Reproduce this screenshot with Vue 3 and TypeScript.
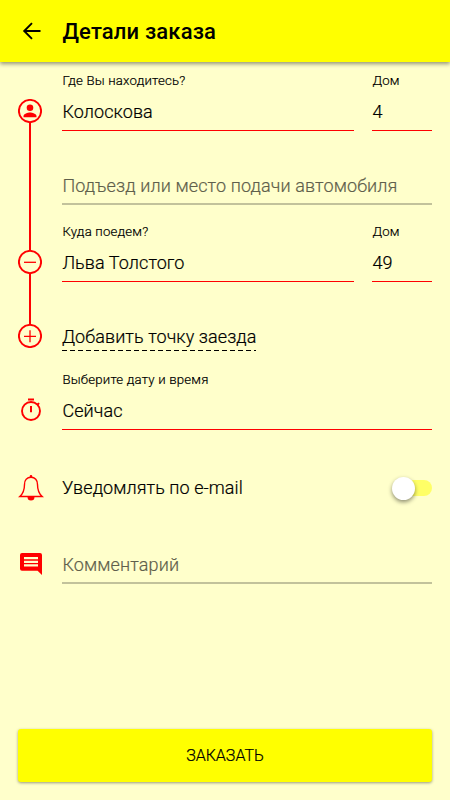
<script setup lang="ts">
import { ref } from 'vue'

interface Stop {
  label: string
  street: string
  house: string
}

const from: Stop = { label: 'Где Вы находитесь?', street: 'Колоскова', house: '4' }
const to: Stop = { label: 'Куда поедем?', street: 'Льва Толстого', house: '49' }
const notify = ref(false)
</script>

<template>
  <main class="screen">
    <header class="bar">
      <svg class="back" viewBox="0 0 20 20" aria-hidden="true">
        <path d="M18.5 10H2.5M10 2.2L2.2 10l7.8 7.8" />
      </svg>
      <h1 class="title">Детали заказа</h1>
    </header>

    <section class="route">
      <div class="rail">
        <svg class="node" viewBox="0 0 24 24">
          <circle class="ring" cx="12" cy="12" r="11.1" />
          <circle class="fill" cx="12" cy="8.8" r="3.3" />
          <path class="fill" d="M5.5 18.2v-1.1c0-2.3 4.3-3.6 6.5-3.6s6.5 1.3 6.5 3.6v1.1z" />
        </svg>
        <span class="link link-long"></span>
        <svg class="node" viewBox="0 0 24 24">
          <circle class="ring" cx="12" cy="12" r="11.1" />
          <path class="sign" d="M6 12.3h12" />
        </svg>
        <span class="link link-short"></span>
        <svg class="node" viewBox="0 0 24 24">
          <circle class="ring" cx="12" cy="12" r="11.1" />
          <path class="sign" d="M6 12.3h12M12 6.3v12" />
        </svg>
      </div>
      <div class="stops">
        <div class="pair first">
          <div class="field street">
            <span class="label">{{ from.label }}</span>
            <span class="value">{{ from.street }}</span>
          </div>
          <div class="field house">
            <span class="label">Дом</span>
            <span class="value">{{ from.house }}</span>
          </div>
        </div>
        <div class="field entrance">
          <span class="value hint">Подъезд или место подачи автомобиля</span>
        </div>
        <div class="pair second">
          <div class="field street">
            <span class="label">{{ to.label }}</span>
            <span class="value">{{ to.street }}</span>
          </div>
          <div class="field house">
            <span class="label">Дом</span>
            <span class="value">{{ to.house }}</span>
          </div>
        </div>
        <div class="add"><span class="add-text">Добавить точку заезда</span></div>
      </div>
    </section>

    <section class="row time">
      <div class="icon">
        <svg class="glyph timer" viewBox="0 0 24 24">
          <circle class="ring" cx="12" cy="13" r="9" />
          <path class="thick" d="M9 1.5h6M12 8v6.2M18.4 6.8l1.7-1.7" />
        </svg>
      </div>
      <div class="field">
        <span class="label">Выберите дату и время</span>
        <span class="value">Сейчас</span>
      </div>
    </section>

    <section class="row notify">
      <div class="icon">
        <svg class="glyph bell" viewBox="0 0 26 28">
          <path class="outline" d="M13 3.2c-4.1 0-6.5 3-6.5 7.2 0 6.4-1.5 9.2-4.7 12.1h22.4c-3.2-2.9-4.7-5.7-4.7-12.1 0-4.2-2.4-7.2-6.5-7.2z" />
          <path class="fill" d="M11.7 3.4V2.2a1.3 1.3 0 0 1 2.6 0v1.2zM9.5 23.1h7a3.5 3.5 0 0 1-7 0z" />
        </svg>
      </div>
      <span class="notify-text">Уведомлять по e-mail</span>
      <button class="switch" :class="{ on: notify }" aria-label="Уведомлять по e-mail" @click="notify = !notify">
        <span class="knob"></span>
      </button>
    </section>

    <section class="row comment">
      <div class="icon">
        <svg class="glyph chat" viewBox="0 0 22 22">
          <path class="fill" fill-rule="evenodd" d="M2 0h18a2 2 0 0 1 2 2v20l-4.4-4.2H2a2 2 0 0 1-2-2V2a2 2 0 0 1 2-2zM4 4.1v2.2h14V4.1zM4 7.7v2.2h14V7.7zM4 11.3v2.2h14v-2.2z" />
        </svg>
      </div>
      <div class="field"><span class="value hint">Комментарий</span></div>
    </section>

    <button class="order">ЗАКАЗАТЬ</button>
  </main>
</template>

<style>
body {
  background: #ffffcb;
}
</style>

<style scoped>
.screen {
  box-sizing: border-box;
  display: flex;
  flex-direction: column;
  height: 800px;
  padding-bottom: 18px;
  background: #ffffcb;
  color: #000;
  font-family: Roboto, "Noto Sans", sans-serif;
  font-size: 18px;
  font-weight: 300;
  letter-spacing: 0.08px;
  -webkit-text-stroke: 0.2px currentColor;
}
.bar {
  display: flex;
  flex: none;
  align-items: center;
  height: 62px;
  padding-left: 22px;
  background: #ff0;
  box-shadow: 0 2px 4px rgba(0, 0, 0, 0.42);
}
.back {
  width: 20px;
  height: 20px;
  margin-right: 20.5px;
  fill: none;
  stroke: #000;
  stroke-width: 1.9;
}
.title {
  margin: 0;
  color: #000;
  font-size: 22px;
  font-weight: 500;
  letter-spacing: 0.15px;
  -webkit-text-stroke: 0;
}
.route {
  display: flex;
  flex: none;
  height: 290px;
}
.rail {
  display: flex;
  flex: none;
  flex-direction: column;
  align-items: center;
  box-sizing: border-box;
  width: 62px;
  padding: 37px 2px 0 0;
}
.node {
  flex: none;
  width: 24px;
  height: 24px;
}
.link {
  flex: none;
  width: 2px;
  background: red;
}
.link-long {
  height: 127px;
}
.link-short {
  height: 50px;
}
.ring {
  fill: none;
  stroke: red;
  stroke-width: 1.9;
}
.fill {
  fill: red;
}
.sign {
  fill: none;
  stroke: red;
  stroke-width: 1.3;
}
.stops {
  flex: 1;
  padding-right: 18px;
}
.pair {
  display: flex;
  gap: 18px;
}
.first {
  height: 69px;
}
.second {
  height: 77px;
}
.field {
  display: flex;
  flex: 1;
  flex-direction: column;
  justify-content: flex-end;
}
.house {
  flex: 0 0 60px;
}
.entrance {
  height: 74px;
}
.label {
  margin-bottom: 5px;
  padding-left: 0.4px;
  font-size: 13.2px;
  line-height: 16px;
  letter-spacing: 0.2px;
}
.value {
  padding-left: 0.4px;
  border-bottom: 1px solid red;
  line-height: 36px;
}
.hint {
  border-bottom: 2px solid #c2c29b;
  color: #5f5f4c;
  line-height: 35px;
  letter-spacing: 0.13px;
}
.add {
  padding-top: 44px;
}
.add-text {
  display: inline-block;
  height: 25px;
  line-height: 22px;
  background: repeating-linear-gradient(90deg, #000 0 5px, transparent 5px 8px) left bottom / 100% 1px no-repeat;
}
.row {
  display: flex;
  flex: none;
  padding-right: 18px;
}
.icon {
  display: flex;
  flex: none;
  align-items: center;
  justify-content: center;
  width: 62px;
}
.time {
  height: 78px;
}
.time .icon {
  padding-top: 38px;
}
.timer {
  width: 24px;
  height: 24px;
}
.thick {
  fill: none;
  stroke: red;
  stroke-width: 2;
}
.notify {
  align-items: center;
  height: 80px;
}
.notify .icon {
  padding-top: 36px;
}
.bell {
  width: 26px;
  height: 28px;
}
.outline {
  fill: none;
  stroke: red;
  stroke-width: 1.4;
}
.notify-text {
  flex: 1;
  padding-top: 34px;
}
.switch {
  display: flex;
  align-items: center;
  width: 38px;
  height: 16px;
  margin-top: 36px;
  padding: 0;
  border: 0;
  border-radius: 8px;
  background: #ffff66;
}
.switch.on {
  justify-content: flex-end;
}
.knob {
  width: 23px;
  height: 23px;
  margin-left: -2px;
  border-radius: 50%;
  background: #fff;
  box-shadow: 0 2px 4px rgba(0, 0, 0, 0.45);
}
.comment {
  height: 74px;
}
.comment .icon {
  padding-top: 34px;
}
.chat {
  width: 22px;
  height: 22px;
}
.order {
  height: 53px;
  margin: auto 18px 0;
  padding: 0;
  border: 0;
  border-radius: 3px;
  background: #ff0;
  box-shadow: 0 1px 3px rgba(0, 0, 0, 0.4);
  color: #000;
  font: 300 16px Roboto, "Noto Sans", sans-serif;
  -webkit-text-stroke: 0.2px currentColor;
}
</style>
